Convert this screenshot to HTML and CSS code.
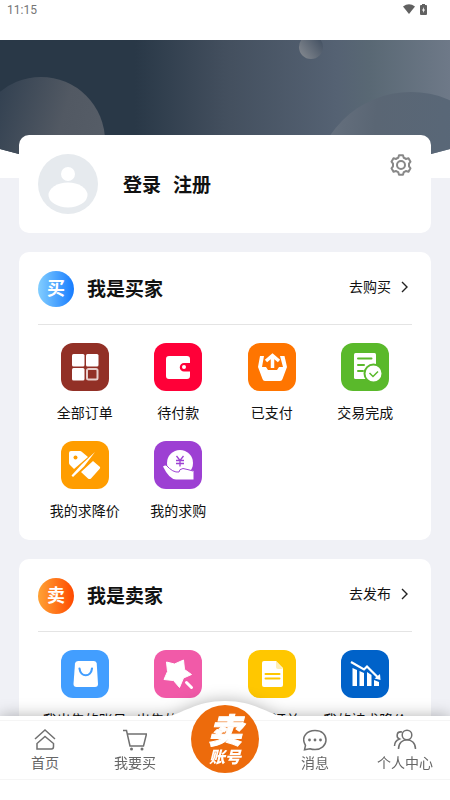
FILE: index.html
```html
<!DOCTYPE html>
<html lang="zh-CN">
<head>
<meta charset="utf-8">
<meta name="viewport" content="width=device-width, initial-scale=1">
<title>个人中心</title>
<link rel="stylesheet" href="styles.css">
</head>
<body>
<header class="status">
  <span>11:15</span>
  <span class="status-icons">
    <svg width="12" height="10" viewBox="0 0 12 10"><path d="M0 2.500Q6-2 12 2.500L6 10Z" fill="#616161"/></svg>
    <svg width="7" height="11" viewBox="0 0 7 11"><path d="M2 0h3v1h1.200Q7 1 7 2v8q0 1-1 1H1Q0 11 0 10V2Q0 1 1 1h1Z" fill="#616161"/><path d="M4 3 2 6.500h1.200V9L5 5.500H3.800Z" fill="#fff"/></svg>
  </span>
</header>

<div class="hero">
  <svg class="hero-art" viewBox="0 0 450 138" preserveAspectRatio="none" aria-hidden="true">
    <defs>
      <linearGradient id="sky"><stop offset="0" stop-color="#293847"/><stop offset=".3" stop-color="#293847"/><stop offset=".5" stop-color="#434f5e"/><stop offset=".75" stop-color="#556273"/><stop offset=".82" stop-color="#596874"/><stop offset="1" stop-color="#6e7988"/></linearGradient>
      <linearGradient id="orbLeft" x1="0" y1=".2" x2="1" y2=".5"><stop offset=".15" stop-color="#344252"/><stop offset=".65" stop-color="#525963"/><stop offset="1" stop-color="#565d67"/></linearGradient>
      <linearGradient id="orbTop" x1=".1" y1=".8" x2=".9" y2=".2"><stop offset="0" stop-color="#7d838b"/><stop offset="1" stop-color="#465364"/></linearGradient>
      <linearGradient id="orbRight" x1="0" y1=".3" x2="1" y2=".4"><stop offset="0" stop-color="#687280"/><stop offset=".3" stop-color="#5a6674"/><stop offset="1" stop-color="#58687a"/></linearGradient>
      <clipPath id="bowl"><path d="M0 0H450V109Q225 174 0 109Z"/></clipPath>
    </defs>
    <g clip-path="url(#bowl)">
      <rect width="450" height="138" fill="url(#sky)"/>
      <circle cx="41" cy="101" r="64" fill="url(#orbLeft)"/>
      <circle cx="311" cy="7" r="12" fill="url(#orbTop)"/>
      <circle cx="411" cy="149" r="97" fill="url(#orbRight)"/>
    </g>
  </svg>
</div>

<main class="content">
  <section class="card profile">
    <svg class="avatar" viewBox="0 0 60 60" aria-hidden="true"><circle cx="30" cy="30" r="30" fill="#e6eaee"/><circle cx="30" cy="20" r="7" fill="#fff"/><ellipse cx="30" cy="41" rx="19.500" ry="12.500" fill="#fff"/></svg>
    <div class="auth"><a href="#login">登录</a><a href="#register">注册</a></div>
    <button class="settings" aria-label="设置">
      <svg width="22" height="22" viewBox="0 0 22 22" fill="none" stroke="#888" stroke-width="2" stroke-linejoin="round"><path d="M9 1.200h4l.7 2.600q1.300.4 2.200 1.200l2.600-.8 2 3.500-1.500 2v2.600l1.500 2-2 3.500-2.600-.8q-.9.800-2.200 1.200L13 20.800H9l-.7-2.600Q7 17.800 6.100 17l-2.600.8-2-3.500 1.500-2V9.700l-1.500-2 2-3.500L6.100 5Q7 4.200 8.300 3.800Z"/><circle cx="11" cy="11" r="4"/></svg>
    </button>
  </section>

  <section class="card">
    <div class="card-head">
      <span class="badge badge-buy">买</span><h2>我是买家</h2>
      <a class="more" href="#buy">去购买<svg width="7" height="12" viewBox="0 0 7 12"><path d="M1 1l5 5-5 5" fill="none" stroke="#222" stroke-width="1.400"/></svg></a>
    </div>
    <div class="grid">
      <a href="#all"><svg class="tile" viewBox="0 0 48 48"><rect width="48" height="48" rx="12" fill="#923026"/><g fill="#fff"><rect x="11" y="11" width="12.500" height="12.500" rx="1.500"/><rect x="25" y="11" width="12.500" height="12.500" rx="1.500"/><rect x="11" y="25" width="12.500" height="12.500" rx="1.500"/></g><rect x="26" y="26" width="10.500" height="10.500" rx="1.500" fill="none" stroke="#e8cfcc" stroke-width="2"/></svg>全部订单</a>
      <a href="#unpaid"><svg class="tile" viewBox="0 0 48 48"><rect width="48" height="48" rx="12" fill="#ff0038"/><path d="M15 13H33Q36 13 36 16V20H30a4.200 4.200 0 0 0 0 8.500H36V33Q36 36 33 36H15Q12 36 12 33V16Q12 13 15 13Z" fill="#fff"/><circle cx="30" cy="24" r="2" fill="#fff"/></svg>待付款</a>
      <a href="#paid"><svg class="tile" viewBox="0 0 48 48"><rect width="48" height="48" rx="12" fill="#ff7500"/><path d="M12 13h4L14 24h4l2 3h9l2-3h4L32 13h4.500L39 24 34.500 36Q34 38 32 38H17Q15 38 14.500 36L10 24Z" fill="#fff"/><path d="M24.500 25V13M18 18l6.500-5.500L31 18" fill="none" stroke="#fff" stroke-width="3.500"/></svg>已支付</a>
      <a href="#done"><svg class="tile" viewBox="0 0 48 48"><rect width="48" height="48" rx="12" fill="#5ab92b"/><rect x="13" y="10" width="22" height="26" rx="1.500" fill="#fff"/><path d="M17 15.500H30.500M17 22h6M17 28h5" stroke="#5ab92b" stroke-width="2" stroke-linecap="round"/><circle cx="32.500" cy="30.500" r="9" fill="#fff" stroke="#5ab92b" stroke-width="2"/><path d="m28.500 30 3.500 3.500 5-5" fill="none" stroke="#5ab92b" stroke-width="1.500"/></svg>交易完成</a>
      <a href="#discount"><svg class="tile" viewBox="0 0 48 48"><rect width="48" height="48" rx="12" fill="#ff9d00"/><path d="M10 10H19Q20 10 21 11L27 16 13 28 9 24Q8 23 8 22V12Q8 10 10 10ZM20 31 32 20 39 26Q39.500 27 38.500 28L30 37.500Q28.500 38.500 27 37.500ZM34 11 21 23 10.500 34.500 12 36 23 25.500Z" fill="#fff"/><circle cx="14.500" cy="16.500" r="2" fill="#ff9d00"/></svg>我的求降价</a>
      <a href="#wanted"><svg class="tile" viewBox="0 0 48 48"><rect width="48" height="48" rx="12" fill="#9d40d3"/><circle cx="26" cy="22" r="13" fill="#fff"/><path d="M9 25.500Q12 23 16 27T24 30.500Q24 28 27 26.500T39.500 30V38.500H22Q15 38 9 25.500Z" fill="#fff"/><path d="M12 24Q19 32 25 31Q25 28 29 27.500Q34 28.500 39 30" fill="none" stroke="#9d40d3"/><path d="m22.500 15 3.500 4.500 3.500-4.500M22 19.500h8M22 22.500h8M26 19v6.500" fill="none" stroke="#9d40d3" stroke-width="1.300"/></svg>我的求购</a>
    </div>
  </section>

  <section class="card">
    <div class="card-head">
      <span class="badge badge-sell">卖</span><h2>我是卖家</h2>
      <a class="more" href="#publish">去发布<svg width="7" height="12" viewBox="0 0 7 12"><path d="M1 1l5 5-5 5" fill="none" stroke="#222" stroke-width="1.400"/></svg></a>
    </div>
    <div class="grid">
      <a href="#accounts"><svg class="tile" viewBox="0 0 48 48"><rect width="48" height="48" rx="12" fill="#429eff"/><path d="M17 11H33Q35.500 11 35.700 13.500L37 34Q37 37 34 37H15.500Q12.500 37 12.500 34L14 13.500Q14.300 11 17 11Z" fill="#fff"/><path d="M18.500 18.500c1 9 11.500 9 12.500 0" fill="none" stroke="#429eff" stroke-width="2.200" stroke-linecap="round"/></svg>我出售的账号</a>
      <a href="#selling"><svg class="tile" viewBox="0 0 48 48"><rect width="48" height="48" rx="12" fill="#f15aa8"/><path d="m12.500 12 8 2L29.500 10l1 9.500 7 5-8 3.500-4 9.500-6-7-9.500-1 3.500-8Z" fill="#fff" stroke="#fff" stroke-linejoin="round"/><path d="m32.500 32.500 5 5" stroke="#fff" stroke-width="3" stroke-linecap="round"/></svg>出售的求购单</a>
      <a href="#orders"><svg class="tile" viewBox="0 0 48 48"><rect width="48" height="48" rx="12" fill="#ffc700"/><path d="M16 11H28L35 18V35Q35 37 33 37H16Q14 37 14 35V13Q14 11 16 11Z" fill="#fff"/><path d="M28 11v6q0 2 2 2h5Z" fill="#ffefb4"/><path d="M17.500 24H31.500M17.500 28.500H31.500" stroke="#ffc700" stroke-width="2" stroke-linecap="round"/></svg>卖家订单</a>
      <a href="#bids"><svg class="tile" viewBox="0 0 48 48"><rect width="48" height="48" rx="12" fill="#0062c9"/><path d="M11.500 18 16 20V36H11.500ZM18.500 21l4.500 2V36H18.500ZM26 22l4.500 3V36H26ZM33 30l5 2v4h-5Z" fill="#fff"/><path d="m10 12 13 7.500 3-3 11 11" fill="none" stroke="#fff" stroke-width="2.200"/><path d="m39.500 30-.5-6-5.500 4.500Z" fill="#fff"/></svg>我的被求降价</a>
    </div>
  </section>
</main>

<nav class="tabbar">
  <svg class="bump" width="120" height="24" viewBox="0 0 120 24" aria-hidden="true"><path d="M0 16C18 13 30 0 60 0S102 13 120 16V24H0Z" fill="#fff"/></svg>
  <div class="tabs">
    <a href="#home"><svg width="24" height="24" viewBox="0 0 24 24"><path d="m2 11 10-9 10 9M4 21V15.500L12 8.500 20.500 15.500V18.500Q20.500 21 18.500 21Z"/></svg>首页</a>
    <a href="#shop"><svg width="24" height="24" viewBox="0 0 24 24"><path d="M0 2.500H3.500L7 18H20.500L23.500 6H4.500"/><circle class="dot" cx="8.500" cy="21" r="1.500"/><circle class="dot" cx="19" cy="21" r="1.500"/></svg>我要买</a>
    <a class="sell" href="#sell"><span class="sell-main">卖</span><span class="sell-sub">账号</span></a>
    <a href="#messages"><svg width="24" height="24" viewBox="0 0 24 24"><path d="M2.500 17.500C-3 8 5 2.500 12 2.500s11 4 11 9.500-5 9.500-11 9.500q-3 0-5-.8l-5.500 1Z"/><circle class="dot" cx="6.500" cy="12" r="1.400"/><circle class="dot" cx="12" cy="12" r="1.400"/><circle class="dot" cx="17.500" cy="12" r="1.400"/></svg>消息</a>
    <a href="#me"><svg width="24" height="24" viewBox="0 0 24 24"><circle cx="14" cy="7" r="4.800"/><path d="M5.500 21C5.500 8.500 22.500 8.500 22.500 21M9 4C3 3 3 9.500 6.500 11Q1.500 13 1.500 18"/></svg>个人中心</a>
  </div>
</nav>
</body>
</html>
```

FILE: styles.css
```css
* { box-sizing: border-box; }
body {
  margin: 0;
  background: #f0f1f6;
  color: #111;
  font: 14px/20px Roboto, "Noto Sans CJK SC", sans-serif;
}
a { color: inherit; text-decoration: none; }
svg { display: block; flex: none; }

.status {
  display: flex;
  justify-content: space-between;
  height: 40px;
  padding: 0 23px 0 7px;
  background: #fff;
  color: #757575;
  font-size: 12px;
}
.status-icons { display: flex; gap: 5px; padding-top: 4px; }

.hero { background: #fff; }
.hero-art { width: 100%; height: 138px; }

.content {
  position: relative;
  display: grid;
  gap: 19px;
  margin-top: -43px;
  padding: 0 19px 104px;
}
.card { padding: 19px; border-radius: 10px; background: #fff; }

.profile { display: flex; align-items: flex-start; height: 98px; }
.avatar { width: 60px; height: 60px; }
.auth {
  display: flex;
  gap: 12px;
  margin-left: 25px;
  line-height: 64px;
  font-size: 19px;
  font-weight: 700;
}
.settings { margin-left: auto; padding: 0; border: 0; background: none; }

.card-head {
  display: flex;
  align-items: center;
  padding-bottom: 17px;
  border-bottom: 1px solid #e4e4e4;
}
.badge {
  width: 36px;
  border-radius: 50%;
  color: #fff;
  font-size: 18px;
  font-weight: 700;
  line-height: 36px;
  text-align: center;
}
.badge-buy { background: linear-gradient(90deg, #82ceff, #177cff); }
.badge-sell { background: linear-gradient(90deg, #ffa235, #ff4a00); }
h2 {
  margin: 0 auto 0 13px;
  padding-top: 2px;
  font-size: 19px;
  line-height: 32px;
}
.more {
  display: flex;
  align-items: center;
  align-self: flex-start;
  gap: 10px;
  padding-right: 4px;
  line-height: 32px;
}

.grid {
  display: grid;
  grid-template-columns: repeat(4, 1fr);
  gap: 18px 0;
  padding-top: 18px;
}
.grid a {
  display: flex;
  flex-direction: column;
  align-items: center;
  gap: 12px;
  white-space: nowrap;
}
.tile { width: 48px; height: 48px; }

.tabbar {
  position: fixed;
  inset: auto 0 0;
  padding: 4px 0 20px;
  background: #fff;
  filter: drop-shadow(0 0 8px rgba(0, 0, 0, .3));
}
.bump { position: absolute; top: -15px; left: calc(50% - 60px); }
.tabs {
  position: relative;
  display: grid;
  grid-template-columns: repeat(5, 1fr);
  grid-template-rows: 100%;
  height: 60px;
  border: solid #f5f5f5;
  border-width: 1px 0;
  color: #666;
}
.tabs a {
  display: flex;
  flex-direction: column;
  align-items: center;
  gap: 1px;
  padding-top: 7px;
}
.tabs svg { fill: none; stroke: #707070; stroke-width: 1.5; }
.tabs .dot { fill: #707070; stroke: none; }
.tabs .sell {
  align-self: end;
  justify-self: center;
  width: 68px;
  height: 68px;
  margin-bottom: 6px;
  gap: 0;
  border-radius: 50%;
  background: #ed6b0c;
  color: #fff;
  font-style: italic;
  font-weight: 900;
}
.sell-main { font-size: 34px; line-height: 38px; -webkit-text-stroke: 1px #fff; }
.sell-sub { font-size: 16px; line-height: 16px; }
```
